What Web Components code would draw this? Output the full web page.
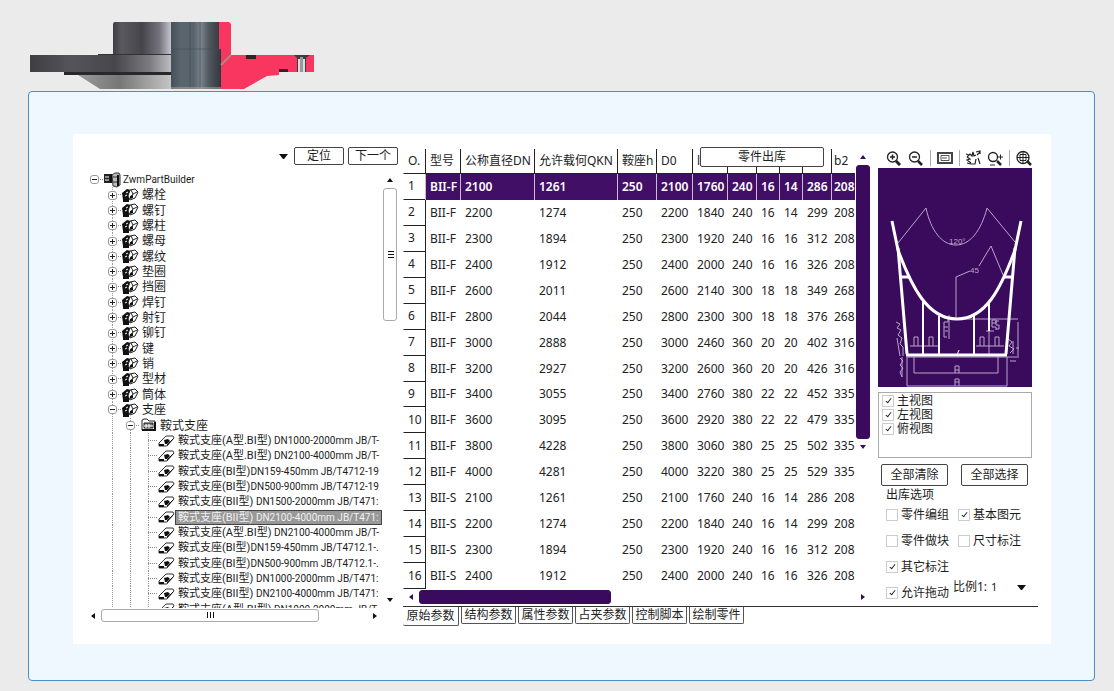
<!DOCTYPE html>
<html lang="zh-CN">
<head>
<meta charset="utf-8">
<title>ZwmPartBuilder</title>
<style>
	body {
		margin: 0;
		min-height: 100vh;
		background: #ebebeb;
		color: #222;
		font: 12px/16px "Noto Sans", "Noto Sans CJK SC", sans-serif;
	}
</style>
</head>
<body>
<part-page></part-page>

<script>
const define = (name, html, setup) => {
	customElements.define(name, class extends HTMLElement {
		constructor() {
			super();
			this.attachShadow({ mode: "open" });
			this.shadowRoot.innerHTML = html;
		}
		connectedCallback() {
			if (setup) setup(this, this.shadowRoot);
		}
	});
};

// section through a flange: turned outside on the left, cut face on the right
define("flange-banner", `
	<style>
		:host { display: block; padding: 22px 30px 0; }
		svg { display: block; }
	</style>
	<svg width="285" height="68" viewBox="0 0 285 68" role="img" aria-label="flange">
		<defs>
			<linearGradient id="hub"><stop offset="0" stop-color="#3f3e44"/><stop offset=".15" stop-color="#5a595f"/><stop offset=".5" stop-color="#46454b"/><stop offset=".8" stop-color="#74737b"/><stop offset="1" stop-color="#c5c4cf"/></linearGradient>
			<linearGradient id="rim"><stop offset="0" stop-color="#3e3e43"/><stop offset=".3" stop-color="#55545a"/><stop offset=".6" stop-color="#47464b"/><stop offset=".85" stop-color="#7c7b80"/><stop offset="1" stop-color="#bdbcc0"/></linearGradient>
			<linearGradient id="cone"><stop offset="0" stop-color="#9a9a9a"/><stop offset=".45" stop-color="#777"/><stop offset="1" stop-color="#c4c4c4"/></linearGradient>
			<linearGradient id="bore"><stop offset="0" stop-color="#46505a"/><stop offset=".2" stop-color="#5a656d"/><stop offset=".45" stop-color="#59636b"/><stop offset=".6" stop-color="#78828a"/><stop offset=".75" stop-color="#525a60"/><stop offset="1" stop-color="#33373c"/></linearGradient>
		</defs>
		<path d="M84 0h57v33H83V2z" fill="url(#hub)"/>
		<path d="M0 33h141v17H0z" fill="url(#rim)"/>
		<path d="M68 32h73v1H68z" fill="#333"/>
		<path d="M34 50h107v3H34z" fill="#28282a"/>
		<path d="M48 53h93v14H70z" fill="url(#cone)"/>
		<path d="M141 0h48v27h2v40h-50z" fill="url(#bore)"/>
		<path d="M141 27h50M160 0v67M170 0v67" stroke="#444c54" fill="none" opacity=".6"/>
		<path d="M141 66h50" stroke="#aaa"/>
		<path d="M189 0h10l2 2v31h83v17h-35v3l-12 1-23 13h-23V27h-2z" fill="#f83660"/>
		<path d="M191 43l10-10" stroke="#a98c7c" stroke-width="2"/>
		<path d="M216 33h10v4h-10zM249 47h9v3h-9z" fill="#3a1c24"/>
		<path d="M264 33h16l-4 3v14h-9V36z" fill="#3c3c40"/>
		<path d="M268 37h2v13h-2zM273 37h2v13h-2z" fill="#ddd"/>
		<path d="M270 35h3v15h-3z" fill="#999"/>
	</svg>
`);

define("text-button", `
	<style>
		:host { display: block; }
		button {
			display: block;
			width: 100%;
			height: 100%;
			padding: 0;
			border: 1px solid #444;
			border-radius: 2px;
			background: #fff;
			color: inherit;
			font: inherit;
		}
	</style>
	<button type="button"><slot></slot></button>
`);

define("check-option", `
	<style>
		:host { display: block; }
		label { display: flex; align-items: center; gap: 3px; height: 100%; white-space: nowrap; }
		input {
			appearance: none;
			box-sizing: border-box;
			display: flex;
			justify-content: center;
			width: 12px;
			height: 12px;
			flex: none;
			margin: 0;
			border: 1px solid #ccc;
			background: #fff;
		}
		input:checked::after {
			content: "";
			width: 2px;
			height: 5px;
			border: solid #222;
			border-width: 0 1px 1px 0;
			transform: rotate(38deg);
			margin-top: 1px;
		}
	</style>
	<label><input type="checkbox"><slot></slot></label>
`, (host, root) => {
	root.querySelector("input").checked = host.hasAttribute("checked");
});

// scroll rail: arrow, thumb, arrow; --thumb is the share taken by the thumb
define("scroll-rail", `
	<style>
		:host { display: flex; align-items: center; color: #111; --thumb: 30%; }
		:host([vertical]) { flex-direction: column; }
		:host([solid]) { color: #3a0a5c; }
		.track { flex: 1; min-width: 0; min-height: 0; align-self: stretch; display: flex; }
		:host([vertical]) .track { flex-direction: column; }
		.thumb {
			box-sizing: border-box;
			flex: 0 0 var(--thumb);
			margin: 0 1px;
			display: flex;
			align-items: center;
			justify-content: center;
			border: 1px solid #aaa;
			border-radius: 3px;
		}
		:host(:not([vertical])) .thumb { margin: 1px 0; }
		:host([solid]) .thumb { background: #3a0a5c; border-color: #3a0a5c; }
		:host([solid]) .grip { display: none; }
		:host([vertical]) .grip { transform: rotate(90deg); }
		svg { display: block; flex: none; fill: currentColor; }
		:host([vertical]) .arrow { transform: rotate(90deg); }
	</style>
	<svg class="arrow" width="16" height="16"><path d="M10 5v6L6 8z"/></svg>
	<div class="track"><div class="thumb"><svg class="grip" width="9" height="7"><path d="M1 0h1v6H1zM4 0h1v6H4zM7 0h1v6H7z"/></svg></div></div>
	<svg class="arrow" width="16" height="16"><path d="M6 5v6l4-3z"/></svg>
`);

const ICONS = {
	root: `<path d="M1 2h6v9H1z" fill="#222"/><path d="M2 5h4M2 8h4" stroke="#fff"/><path d="M9 3l3-2h4l1 2v10l-3 2-4-1z" fill="#bbb" stroke="#333"/><path d="M10 5h4M10 10h4" stroke="#333"/><path d="M15 3v11M8 2v9" stroke="#111" stroke-width="2"/>`,
	group: `<path d="M1 6l5-4 4 1-2 9-6 1z" fill="#111"/><path d="M9 3l5-1 3 3-3 6-5 2-2-4z" fill="#fff" stroke="#222"/><path d="M10 3l2 4 4-2M12 7l-3 4" stroke="#222" fill="none"/><path d="M2 12h6v3H2zM9 9l3-1v3l-3 1z" fill="#111"/><path d="M5 6l2-1M4 9l2-1" stroke="#fff"/>`,
	folder: `<path d="M3 13V3l2-1h3l2 2h6v9z" fill="#fff" stroke="#222"/><path d="M5 6h9v5H5z" fill="#777" stroke="#222"/><path d="M7 7v4M10 7v4M5 9h9" stroke="#fff"/><path d="M3 13h13V5" stroke="#111" fill="none" stroke-width="2"/>`,
	part: `<path d="M2 10l7-7h7l1 2-7 8H2z" fill="#fff" stroke="#333"/><path d="M2 11h5v2H2zM7 7l4-1 2 2-3 3H8z" fill="#111"/><path d="M10 12l6-6" stroke="#111"/>`
};

define("part-tree", `
	<style>
		:host { display: flex; flex-direction: column; color: #1c1c1c; }
		.find { display: flex; justify-content: flex-end; gap: 4px; height: 18px; margin-bottom: 7px; }
		.find text-button { width: 50px; }
		.find .combo { display: grid; flex: 1; }
		.find select, .find svg { grid-area: 1 / 1; }
		.find select { appearance: none; border: 0; background: none; width: 100%; }
		.find svg { justify-self: end; align-self: center; pointer-events: none; margin-right: 2px; }
		.view { display: flex; height: 436px; }
		.clip { flex: 1; min-width: 0; overflow: hidden; }
		ul {
			display: grid;
			grid-auto-rows: 1fr;
			height: 445px;
			margin: 0;
			padding: 0;
			list-style: none;
			font-family: Roboto, "Noto Sans CJK SC", sans-serif;
		}
		li { display: flex; align-items: stretch; white-space: nowrap; line-height: 16px; min-height: 0; }
		.cell { flex: none; width: 18px; display: flex; align-items: center; justify-content: center; position: relative; }
		.down { background: repeating-linear-gradient(#999 0 1px, transparent 1px 2px) center / 1px 100% no-repeat; }
		.tee::after {
			content: "";
			position: absolute;
			left: 9px;
			right: 0;
			top: 7px;
			border-top: 1px dotted #888;
		}
		.cell button {
			z-index: 1;
			width: 9px;
			height: 9px;
			padding: 0;
			border: 1px solid #999;
			border-radius: 3px;
			background: #fff;
		}
		.cell svg { display: block; }
		.icon { flex: none; width: 18px; align-self: center; }
		.name { padding-left: 3px; }
		.root .name { padding-left: 2px; }
		.leaf .name, .root .name { font-size: 11px; }
		.spec { font-size: 10px; }
		.selected .name { flex: 1; background: #989898; color: #f2f2f2; outline: 1px solid #444; outline-offset: -1px; }
		.across { margin-right: 15px; height: 15px; --thumb: 82%; }
		.view scroll-rail { width: 16px; --thumb: 33%; }
	</style>
	<div class="find">
		<div class="combo">
			<select aria-label="查找"><option></option></select>
			<svg width="9" height="5"><path d="M0 0h9L5 5H4z" fill="#111"/></svg>
		</div>
		<text-button>定位</text-button>
		<text-button>下一个</text-button>
	</div>
	<div class="view">
		<div class="clip"><ul></ul></div>
		<scroll-rail vertical></scroll-rail>
	</div>
	<scroll-rail class="across"></scroll-rail>
`, (host, root) => {
	const saddle = "鞍式支座";
	const groups = "螺栓 螺钉 螺柱 螺母 螺纹 垫圈 挡圈 焊钉 射钉 铆钉 键 销 型材 筒体 支座".split(" ");
	const leaves = [
		["(A型.BI型)", " DN1000-2000mm JB/T-"],
		["(A型.BI型)", " DN2100-4000mm JB/T-"],
		["(BI型)", "DN159-450mm JB/T4712-19"],
		["(BI型)", "DN500-900mm JB/T4712-19"],
		["(BII型)", " DN1500-2000mm JB/T471:"],
		["(BII型)", " DN2100-4000mm JB/T471:"],
		["(A型.BI型)", " DN2100-4000mm JB/T-"],
		["(BI型)", "DN159-450mm JB/T4712.1-."],
		["(BI型)", "DN500-900mm JB/T4712.1-."],
		["(BII型)", " DN1000-2000mm JB/T471:"],
		["(BII型)", " DN2100-4000mm JB/T471:"],
		["(A型.BI型)", " DN1000-2000mm JB/T-"]
	];
	const cell = (cls, inner = "") => `<span class="cell ${cls}">${inner}</span>`;
	const toggle = (open, label) => `<button type="button" aria-label="${label}"><svg width="7" height="7"><path d="M1 3h5v1H1z${open ? "" : "M3 1h1v5H3z"}" fill="#222"/></svg></button>`;
	const icon = name => `<svg class="icon" width="18" height="16" viewBox="0 0 18 16">${ICONS[name]}</svg>`;

	let rows = `<li class="root">${cell("tee", toggle(true, "ZwmPartBuilder"))}${icon("root")}<span class="name"><span class="spec">ZwmPartBuilder</span></span></li>`;
	for (const g of groups) {
		rows += `<li>${cell("")}${cell("down tee", toggle(g === "支座", g))}${icon("group")}<span class="name">${g}</span></li>`;
	}
	rows += `<li>${cell("")}${cell("down")}${cell("down tee", toggle(true, saddle))}${icon("folder")}<span class="name">${saddle}</span></li>`;
	leaves.forEach(([type, spec], i) => {
		rows += `<li class="leaf${i === 5 ? " selected" : ""}">${cell("")}${cell("down")}${cell("down")}${cell("down tee")}${icon("part")}<span class="name">${saddle}${type}<span class="spec">${spec.replace(" DN", "&nbsp;DN")}</span></span></li>`;
	});
	root.querySelector("ul").innerHTML = rows;
});

define("part-table", `
	<style>
		:host { display: grid; grid-template-columns: minmax(0, 1fr) 16px; grid-template-rows: auto 16px; padding-top: 2px; position: relative; }
		.clip { overflow: hidden; }
		table { table-layout: fixed; width: 100%; height: 440px; border-collapse: separate; border-spacing: 0; }
		tr { height: 25px; }
		th, td {
			padding: 0 0 0 4px;
			border-left: 1px solid transparent;
			text-align: left;
			font-weight: normal;
			line-height: 16px;
			white-space: nowrap;
		}
		th:last-child, td:last-child { padding-left: 2px; }
		thead th { border-left-color: #222; border-bottom: 1px solid #222; }
		thead th:first-child { border-left-color: transparent; }
		tbody th { border-bottom: 1px solid #222; }
		td:nth-child(2) { border-left-color: #222; }
		.current td { background: #420f66; color: #fff; font-weight: 600; border-left-color: #c9bcd6; }
		.down { grid-area: 1 / 2; --thumb: 100%; margin-bottom: 134px; }
		.across { grid-area: 2 / 1 / 3 / 3; --thumb: 44%; }
		text-button { position: absolute; top: 0; right: 47px; width: 124px; height: 20px; }
	</style>
	<div class="clip">
		<table>
			<colgroup></colgroup>
			<thead><tr></tr></thead>
			<tbody></tbody>
		</table>
	</div>
	<scroll-rail class="down" vertical solid></scroll-rail>
	<scroll-rail class="across" solid></scroll-rail>
	<text-button>零件出库</text-button>
`, (host, root) => {
	const widths = [22, 35, 74, 83, 39, 36, 35, 29, 23, 23, 29, 25];
	const heads = ["O.", "型号", "公称直径DN", "允许载何QKN", "鞍座h", "D0", "l", "", "", "", "", "b2"];
	const sizes = [
		"2100 1261 250 2100 1760 240 16 14 286 208",
		"2200 1274 250 2200 1840 240 16 14 299 208",
		"2300 1894 250 2300 1920 240 16 16 312 208",
		"2400 1912 250 2400 2000 240 16 16 326 208",
		"2600 2011 250 2600 2140 300 18 18 349 268",
		"2800 2044 250 2800 2300 300 18 18 376 268",
		"3000 2888 250 3000 2460 360 20 20 402 316",
		"3200 2927 250 3200 2600 360 20 20 426 316",
		"3400 3055 250 3400 2760 380 22 22 452 335",
		"3600 3095 250 3600 2920 380 22 22 479 335",
		"3800 4228 250 3800 3060 380 25 25 502 335",
		"4000 4281 250 4000 3220 380 25 25 529 335"
	];
	const rows = [
		...sizes.map(s => "BII-F " + s),
		...sizes.slice(0, 4).map(s => "BII-S " + s)
	];
	root.querySelector("colgroup").innerHTML = widths.map(w => `<col style="width:${w}px">`).join("");
	root.querySelector("thead tr").innerHTML = heads.map(h => `<th scope="col">${h}</th>`).join("");
	root.querySelector("tbody").innerHTML = rows.map((r, i) =>
		`<tr${i ? "" : ' class="current"'}><th scope="row">${i + 1}</th>${r.split(" ").map(v => `<td>${v}</td>`).join("")}</tr>`
	).join("");
});

define("saddle-drawing", `
	<style>
		:host { display: block; background: #3a0a5c; }
		svg { display: block; width: 100%; height: 219px; }
		text { font: 8px "Liberation Sans", sans-serif; fill: #b9a6cb; }
	</style>
	<svg viewBox="0 0 154 219" fill="none" role="img" aria-label="鞍式支座">
		<g stroke="#b9a6cb">
			<path d="M20 75L48 40C53 63 64 77 78 77S103 63 109 40l28 34"/>
			<path d="M78 152v-43l14-6M101 98l12-20 12 29"/>
			<path d="M82 151h58M140 154v34M29 189h112M111 163v24M108 163h8"/>
			<path d="M32 178h29M98 178h28M36 178v-9h4v9M51 178v-9h4v9M102 178v-9h4v9M117 178v-9h4v9"/>
			<path d="M36 189v16h84v-18M29 189v29h100v-29"/>
			<path d="M18 154l4 2-3 4 4 2-3 5 4 3-2 6 3 3v9M19 170l3 18M22 190l3 3-3 4 3 3-3 4 2 5M24 189v20"/>
			<path d="M66 150h4v4h-4v5h4M66 159v10h3M67 163h3M71 147v24"/>
			<path d="M114 155h4v-3h-4v7h4v3M121 153h-3v4h3v4h-3"/>
			<path d="M130 171l4 3-3 4 5 3-4 4M135 173v13M138 180h3M132 193h6"/>
			<path d="M77 198h4v4h-4M77 198v7M81 202v3M77 211h4M77 214h4M77 211v7M81 211v7"/>
		</g>
		<g stroke="#fff">
			<path d="M14 53L20 82C34 120 50 151 79 151S123 120 137 82l6-29" stroke-width="3"/>
			<path d="M20 80l9 106M137 80l-9 106" stroke-width="3"/>
			<path d="M28 187h101" stroke-width="3"/>
			<path d="M23 109h8M125 109h9" stroke-width="3"/>
			<path d="M45 134v53M61 148v39M96 148v39M111 134v29" stroke-width="2"/>
			<path d="M79 187l2-5" stroke-width="1"/>
		</g>
		<text x="71" y="76">120°</text>
		<text x="92" y="105">45</text>
	</svg>
`);

define("view-panel", `
	<style>
		:host { display: block; color: #1c1c1c; }
		.tools { display: flex; align-items: center; justify-content: space-between; height: 21px; padding-left: 8px; }
		.tools button { display: block; border: 0; padding: 0; background: none; }
		.tools svg { display: block; fill: none; stroke: #222; }
		.tools i { width: 1px; height: 16px; background: #aaa; }
		.views { box-sizing: border-box; height: 66px; margin: 5px 0 6px; padding: 1px 3px; border: 1px solid #aaa; }
		.views check-option { height: 14px; line-height: 14px; }
		.all { display: flex; gap: 13px; height: 22px; padding: 0 4px 0 3px; }
		.all text-button { flex: 1; }
		fieldset { margin: 2px 0 0; padding: 0 0 0 8px; border: 0; min-width: 0; }
		legend { padding: 0; line-height: 14px; }
		.options { display: grid; grid-template-columns: 67px 1fr; grid-auto-rows: 26px; }
		.second { padding-left: 5px; }
		.scale { display: flex; align-items: center; justify-content: space-between; height: 14px; padding-right: 6px; }
		.scale label { white-space: nowrap; }
		.scale .combo { display: grid; flex: 1; margin-left: 4px; }
		select { grid-area: 1 / 1; appearance: none; border: 0; padding: 0; background: none; font: inherit; font-size: 11px; color: inherit; width: 100%; }
		.combo svg { grid-area: 1 / 1; place-self: center end; pointer-events: none; }
	</style>
	<div class="tools">
		<button type="button" aria-label="放大"><svg width="16" height="16"><circle cx="6.500" cy="7" r="5" stroke-width="1.300"/><path d="M4 7h5M6.500 4.500v5" stroke-width="1.500"/><path d="M10 11l4 4" stroke-width="3"/></svg></button>
		<button type="button" aria-label="缩小"><svg width="16" height="16"><circle cx="6.500" cy="7" r="5" stroke-width="1.300"/><path d="M4 7h5" stroke-width="1.500"/><path d="M10 11l4 4" stroke-width="2.500"/></svg></button>
		<i></i>
		<button type="button" aria-label="窗口"><svg width="16" height="16"><path d="M1 3h14v10H1z" stroke-width="2" stroke="#444"/><path d="M4 5.500h8v5H4zM5 8h5" stroke="#555"/></svg></button>
		<i></i>
		<button type="button" aria-label="平移"><svg width="16" height="16"><path d="M1 4l3 1M2 7l3-3 2 2 1-4 1 4 2-1M2 7l3 2-3 1 4 3M2 13l4 1h4l1-5M11 2l4-1v3M12 5l3-3M13 8l2 6" stroke-width="1.200"/></svg></button>
		<button type="button" aria-label="实时缩放"><svg width="16" height="16"><circle cx="6" cy="7" r="4.500" stroke-width="1.300"/><path d="M10 11l4 4" stroke-width="2.500"/><path d="M11 7h5M13.500 4.500v5M3 15h5"/></svg></button>
		<i></i>
		<button type="button" aria-label="全部"><svg width="16" height="16"><circle cx="7" cy="7.500" r="6" stroke-width="1.300"/><path d="M1 7.500h12M7 2v11M4 4.500v6M10 4.500v6M4 4.500h6M4 10.500h6" stroke-width="1"/><path d="M11 11l4 4" stroke-width="2.500"/></svg></button>
	</div>
	<saddle-drawing></saddle-drawing>
	<div class="views">
		<check-option checked>主视图</check-option>
		<check-option checked>左视图</check-option>
		<check-option checked>俯视图</check-option>
	</div>
	<div class="all">
		<text-button>全部清除</text-button>
		<text-button>全部选择</text-button>
	</div>
	<fieldset>
		<legend>出库选项</legend>
		<div class="options">
			<check-option>零件编组</check-option>
			<check-option class="second" checked>基本图元</check-option>
			<check-option>零件做块</check-option>
			<check-option class="second">尺寸标注</check-option>
			<check-option checked>其它标注</check-option>
			<span></span>
			<check-option checked>允许拖动</check-option>
			<div class="scale">
				<label for="scale">比例1:</label>
				<div class="combo">
					<select id="scale"><option>1</option></select>
					<svg width="9" height="5"><path d="M0 0h9L5 5H4z" fill="#111"/></svg>
				</div>
			</div>
		</div>
	</fieldset>
`);

define("sheet-tabs", `
	<style>
		:host { display: flex; align-items: flex-start; gap: 2px; }
		button {
			box-sizing: border-box;
			width: 55px;
			height: 17px;
			padding: 0;
			border: 1px solid #555;
			border-top: 0;
			border-radius: 0 0 2px 2px;
			background: #fff;
			color: #222;
			font: inherit;
			line-height: 16px;
			white-space: nowrap;
		}
		button[aria-selected=true] { width: 56px; height: 19px; border-left: 0; }
	</style>
`, (host, root) => {
	["原始参数", "结构参数", "属性参数", "占夹参数", "控制脚本", "绘制零件"].forEach((name, i) => {
		const tab = document.createElement("button");
		tab.type = "button";
		tab.role = "tab";
		tab.ariaSelected = String(i === 0);
		tab.textContent = name;
		root.append(tab);
	});
	host.role = "tablist";
});

define("part-page", `
	<style>
		:host { display: block; padding-bottom: 10px; }
		main { margin: 1px 19px 0 28px; padding: 42px 43px 36px 44px; border: 1px solid #4c8fc4; border-radius: 4px; background: #eff7ff; }
		.window { display: flex; gap: 5px; padding: 13px 13px 18px 12px; background: #fff; }
		part-tree { flex: 313 1 0; min-width: 0; }
		.work { flex: 635 1 0; min-width: 0; }
		.sheet { display: flex; gap: 7px; border-bottom: 1px solid #333; }
		part-table { flex: 1; min-width: 0; align-self: flex-start; }
		view-panel { flex: none; width: 154px; margin-right: 6px; }
	</style>
	<flange-banner></flange-banner>
	<main>
		<div class="window">
			<part-tree></part-tree>
			<div class="work">
				<div class="sheet">
					<part-table></part-table>
					<view-panel></view-panel>
				</div>
				<sheet-tabs></sheet-tabs>
			</div>
		</div>
	</main>
`);
</script>
</body>
</html>
